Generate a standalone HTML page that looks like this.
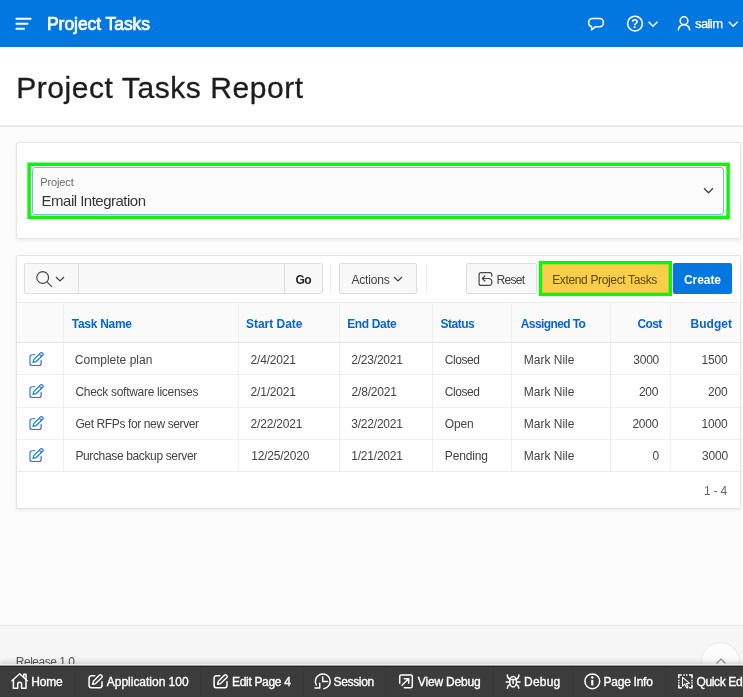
<!DOCTYPE html>
<html lang="en">
<head>
<meta charset="utf-8">
<title>Project Tasks Report</title>
<style>
*{box-sizing:border-box;margin:0;padding:0}
html,body{width:743px;height:697px;overflow:hidden}
body{font-family:"Liberation Sans",sans-serif;background:#fcfcfc;color:#262626;position:relative;font-size:12px}
.abs{position:absolute}
.t{position:absolute;white-space:nowrap;line-height:1;z-index:5}
svg{position:absolute;overflow:visible;z-index:4}
#hdr{left:0;top:0;width:743px;height:47px;background:#0277e0}
#titlebar{left:0;top:47px;width:743px;height:80px;background:#fff;border-bottom:2px solid #ececec}
.region{background:#fff;border:1px solid #e4e4e4;border-radius:2px;box-shadow:0 2px 3px rgba(0,0,0,.06)}
#r1{left:16px;top:142px;width:725px;height:97px}
#r2{left:16px;top:255px;width:725px;height:254px}
#sel{left:32px;top:167px;width:692px;height:48px;border:1px solid #86b3ea;background:#fcfcfc;border-radius:3px}
.btn{position:absolute;top:263px;height:31px;border:1px solid #dedede;background:#f8f8f8;border-radius:2px}
.tsep{position:absolute;top:263px;width:1px;height:31px;background:#efefef}
.hl{position:absolute;left:17px;width:723px;height:1px;background:#ebebeb}
.vl{position:absolute;top:302px;width:1px;height:169px;background:#eeeeee}
#footer{left:0;top:625px;width:743px;height:72px;background:#f6f6f6;border-top:1px solid #e6e6e6}
#dev{left:0;top:666px;width:743px;height:31px;background:#3c3c3c;border-top:1px solid #262626;box-shadow:0 -1px 0 #9a9a9a,0 -2px 0 #eee,0 -3px 6px rgba(0,0,0,.2);z-index:3}
.dsep{position:absolute;top:667px;width:1px;height:30px;background:#373737;z-index:4}
</style>
</head>
<body>
<!-- header -->
<div id="hdr" class="abs"></div>
<svg style="left:15px;top:17px" width="17" height="13" viewBox="0 0 17 13"><path d="M1.500 1.800h14M1.500 6.800h11M1.500 11.800h7.500" stroke="#fff" stroke-width="2.100" stroke-linecap="round" fill="none"/></svg>
<svg style="left:587px;top:17px" width="18" height="14" viewBox="0 0 18 14"><path d="M5.200 1.400h7.600a3.500 3.500 0 0 1 3.500 3.500v1.300a3.500 3.500 0 0 1-3.500 3.500H8.600L4.600 12.900V9.600A3.500 3.500 0 0 1 1.700 6.200V4.900A3.500 3.500 0 0 1 5.200 1.400z" stroke="#fff" stroke-width="1.500" fill="none" stroke-linejoin="round"/></svg>
<svg style="left:626px;top:15px" width="18" height="18" viewBox="0 0 18 18"><circle cx="9" cy="8.600" r="7.400" stroke="#fff" stroke-width="1.500" fill="none"/></svg>
<span class="t" style="left:631.300px;top:17.500px;font-size:12px;font-weight:bold;color:#fff">?</span>
<svg style="left:648px;top:21px" width="10" height="6" viewBox="0 0 10 6"><path d="M.6 .8l4.400 4.400 4.400-4.400" stroke="#fff" stroke-width="1.500" fill="none"/></svg>
<svg style="left:677px;top:16px" width="14" height="15" viewBox="0 0 14 15"><circle cx="7" cy="4.700" r="3.900" stroke="#fff" stroke-width="1.500" fill="none"/><path d="M1.200 14.300c.5-3.500 2.800-5.600 5.800-5.600s5.300 2.100 5.800 5.600" stroke="#fff" stroke-width="1.500" fill="none"/></svg>
<svg style="left:728px;top:21px" width="10" height="6" viewBox="0 0 10 6"><path d="M.8 .8l4.400 4.400 4.400-4.400" stroke="#fff" stroke-width="1.500" fill="none"/></svg>

<!-- title bar -->
<div id="titlebar" class="abs"></div>

<!-- region 1 -->
<div id="r1" class="abs region"></div>
<svg style="left:0;top:0" width="743" height="697" viewBox="0 0 743 697">
  <rect x="29.100" y="164.300" width="699" height="53" fill="none" stroke="#0cf60c" stroke-width="3.500" rx="0"/>
  <rect x="540.500" y="262.600" width="129.800" height="31.800" fill="#fbce4a" stroke="#0cf60c" stroke-width="3.400" rx="0"/>
</svg>
<div id="sel" class="abs"></div>
<svg style="left:703px;top:187px" width="11" height="7" viewBox="0 0 11 7"><path d="M1 1.300l4.500 4.500L10 1.300" stroke="#404040" stroke-width="1.300" fill="none"/></svg>

<!-- region 2 -->
<div id="r2" class="abs region"></div>

<!-- toolbar -->
<div class="btn" style="left:24px;width:299px"></div>
<div class="tsep" style="left:78px;top:264px;height:29px;background:#dedede"></div>
<div class="tsep" style="left:284px;top:264px;height:29px;background:#dedede"></div>
<svg style="left:35px;top:270px" width="18" height="18" viewBox="0 0 18 18"><circle cx="7.700" cy="7.500" r="5.900" stroke="#4a4a4a" stroke-width="1.200" fill="none"/><path d="M12 11.800L17 16.800" stroke="#4a4a4a" stroke-width="1.200"/></svg>
<svg style="left:55px;top:276px" width="10" height="6" viewBox="0 0 10 6"><path d="M1 1l4 4 4-4" stroke="#404040" stroke-width="1.200" fill="none"/></svg>
<div class="tsep" style="left:330px"></div>
<div class="btn" style="left:339px;width:78px"></div>
<svg style="left:393px;top:276px" width="10" height="6" viewBox="0 0 10 6"><path d="M1 1l4 4 4-4" stroke="#404040" stroke-width="1.200" fill="none"/></svg>
<div class="tsep" style="left:426px"></div>
<div class="btn" style="left:466px;width:71px"></div>
<svg style="left:0;top:0" width="743" height="697" viewBox="0 0 743 697"><g stroke="#454545" stroke-width="1.200" fill="none" stroke-linecap="round" stroke-linejoin="round"><path d="M491.800 276.200V274.700a2 2 0 0 0-2-2H481.100a2 2 0 0 0-2 2V283.400a2 2 0 0 0 2 2H488.400a3.450 3.450 0 0 0 0-6.900H482.500"/><path d="M484.900 276L482.400 278.500L484.900 281"/></g></svg>
<div class="abs" style="left:673px;top:263px;width:59px;height:31px;background:#0277e0;border-radius:2px;z-index:4"></div>

<!-- table -->
<div class="abs" style="left:17px;top:302px;width:723px;height:40px;background:#fafafa"></div>
<div class="hl" style="top:302px"></div>
<div class="hl" style="top:342px;background:#e4e4e4"></div>
<div class="hl" style="top:374px;background:#f0f0f0"></div>
<div class="hl" style="top:407px;background:#f0f0f0"></div>
<div class="hl" style="top:439px;background:#f0f0f0"></div>
<div class="hl" style="top:471px"></div>
<div class="vl" style="left:63px"></div>
<div class="vl" style="left:238px"></div>
<div class="vl" style="left:339px"></div>
<div class="vl" style="left:432px"></div>
<div class="vl" style="left:511px"></div>
<div class="vl" style="left:610px"></div>
<div class="vl" style="left:670px"></div>
<svg style="left:29px;top:352px" width="15" height="15" viewBox="0 0 15 15"><g stroke="#1f7ad8" stroke-width="1.200" fill="none" stroke-linejoin="round" stroke-linecap="round"><path d="M5.800 2.750H3a2 2 0 0 0-2 2V11.500a2 2 0 0 0 2 2h7.100a2 2 0 0 0 2-2V8.400"/><path d="M4 10.400l.8-2.900L11.500 0.900a1.200 1.200 0 0 1 1.700 0l.6.600a1.200 1.200 0 0 1 0 1.700L7 9.700z"/><path d="M10.300 2.100l2.300 2.300"/></g></svg>
<svg style="left:29px;top:384px" width="15" height="15" viewBox="0 0 15 15"><g stroke="#1f7ad8" stroke-width="1.200" fill="none" stroke-linejoin="round" stroke-linecap="round"><path d="M5.800 2.750H3a2 2 0 0 0-2 2V11.500a2 2 0 0 0 2 2h7.100a2 2 0 0 0 2-2V8.400"/><path d="M4 10.400l.8-2.900L11.500 0.900a1.200 1.200 0 0 1 1.700 0l.6.600a1.200 1.200 0 0 1 0 1.700L7 9.700z"/><path d="M10.300 2.100l2.300 2.300"/></g></svg>
<svg style="left:29px;top:416px" width="15" height="15" viewBox="0 0 15 15"><g stroke="#1f7ad8" stroke-width="1.200" fill="none" stroke-linejoin="round" stroke-linecap="round"><path d="M5.800 2.750H3a2 2 0 0 0-2 2V11.500a2 2 0 0 0 2 2h7.100a2 2 0 0 0 2-2V8.400"/><path d="M4 10.400l.8-2.900L11.500 0.900a1.200 1.200 0 0 1 1.700 0l.6.600a1.200 1.200 0 0 1 0 1.700L7 9.700z"/><path d="M10.300 2.100l2.300 2.300"/></g></svg>
<svg style="left:29px;top:448px" width="15" height="15" viewBox="0 0 15 15"><g stroke="#1f7ad8" stroke-width="1.200" fill="none" stroke-linejoin="round" stroke-linecap="round"><path d="M5.800 2.750H3a2 2 0 0 0-2 2V11.500a2 2 0 0 0 2 2h7.100a2 2 0 0 0 2-2V8.400"/><path d="M4 10.400l.8-2.900L11.500 0.900a1.200 1.200 0 0 1 1.700 0l.6.600a1.200 1.200 0 0 1 0 1.700L7 9.700z"/><path d="M10.300 2.100l2.300 2.300"/></g></svg>

<!-- footer -->
<div id="footer" class="abs"></div>
<div class="abs" style="left:701px;top:642px;width:39px;height:39px;border-radius:50%;background:#fcfcfc;border:1px solid #e9e9e9"></div>
<svg style="left:716px;top:658px" width="10" height="6" viewBox="0 0 10 6"><path d="M.5 5.500l4.500-4.500 4.500 4.500" stroke="#858585" stroke-width="1.200" fill="none"/></svg>

<div style="position:absolute;left:0;top:0;width:743px;height:697px;will-change:transform;z-index:2"><span class="t" style="left:15.8px;top:656.2px;font-size:12px;font-weight:normal;color:#555;letter-spacing:-0.48px;z-index:2">Release 1.0</span></div>
<!-- dev toolbar -->
<div id="dev" class="abs"></div>
<div class="dsep" style="left:75px"></div>
<div class="dsep" style="left:200px"></div>
<div class="dsep" style="left:303px"></div>
<div class="dsep" style="left:385px"></div>
<div class="dsep" style="left:493px"></div>
<div class="dsep" style="left:572px"></div>
<div class="dsep" style="left:665px"></div>
<svg style="left:0;top:0;z-index:6" width="743" height="697" viewBox="0 0 743 697">
<g stroke="#fff" stroke-width="1.500" fill="none" stroke-linejoin="round" stroke-linecap="round"><path d="M12 680.700L19.600 673.800L27.200 680.700"/><path d="M13.400 680.200V688.300H17.700V684.200a1.950 1.950 0 0 1 3.900 0V688.300H26V680.200"/><path d="M23.700 676.800V674.200H26V679.300"/></g>
<g stroke="#fff" stroke-width="1.500" fill="none" stroke-linejoin="round" stroke-linecap="round" transform="translate(88.3,674)"><path d="M6.500 1.800H3A2.200 2.200 0 0 0 .8 4V11.500a2.200 2.200 0 0 0 2.200 2.200h8.500a2.200 2.200 0 0 0 2.200-2.200V7.800"/><path d="M4.300 10.300l.8-3L11.300 1.100a1.100 1.100 0 0 1 1.600 0l.7.700a1.100 1.100 0 0 1 0 1.600L7.300 9.600z" stroke-width="1.400"/></g>
<g stroke="#fff" stroke-width="1.500" fill="none" stroke-linejoin="round" stroke-linecap="round" transform="translate(213.3,674)"><path d="M6.500 1.800H3A2.200 2.200 0 0 0 .8 4V11.500a2.200 2.200 0 0 0 2.200 2.200h8.500a2.200 2.200 0 0 0 2.200-2.200V7.800"/><path d="M4.300 10.300l.8-3L11.300 1.100a1.100 1.100 0 0 1 1.600 0l.7.700a1.100 1.100 0 0 1 0 1.600L7.300 9.600z" stroke-width="1.400"/></g>
<g stroke="#fff" stroke-width="1.500" fill="none" stroke-linejoin="round" stroke-linecap="round"><path d="M323.800 688.650A7.400 7.400 0 1 0 316.300 684.900"/><path d="M315 688h4.700v-4.700"/><path d="M322.700 677v4.600h4.800"/></g>
<g stroke="#fff" stroke-width="1.500" fill="none" stroke-linejoin="round" stroke-linecap="round"><path d="M399.700 683.200V676.500a1.500 1.500 0 0 1 1.500-1.500H410.800a1.500 1.500 0 0 1 1.500 1.500V686.200a1.500 1.500 0 0 1-1.500 1.500H404.300"/><path d="M402 685.200L408.600 678.800M404.300 678.700H408.700V683.200"/></g>
<g stroke="#fff" stroke-width="1.500" fill="none" stroke-linejoin="round" stroke-linecap="round" stroke-width="1.400"><ellipse cx="513.100" cy="681.700" rx="3.400" ry="5.200"/><path d="M509.900 679.500h6.400M513.100 680.800v2.600"/><path d="M509.800 679c-2-.5-2.500-2-2.500-4M516.400 679c2-.5 2.500-2 2.500-4M509.500 682h-3.300M516.700 682h3.300M509.900 684.600c-1.800.6-2.400 1.700-2.500 3.500M516.300 684.600c1.800.6 2.400 1.700 2.500 3.500"/></g>
<g stroke="#fff" stroke-width="1.500" fill="none" stroke-linejoin="round" stroke-linecap="round"><circle cx="592.300" cy="681.300" r="7.400"/></g><circle cx="592.300" cy="677.600" r="1.250" fill="#fff"/><rect x="591.200" y="679.900" width="2.200" height="5.500" fill="#fff"/>
<g stroke="#fff" stroke-width="1.500" fill="none"><path d="M678.800 678.300V675.100H681.800M689 675.100H692V678.300M692 684.600V687.700H689M681.800 687.700H678.800V684.600"/><path d="M683.400 675.100h1.500M686 675.100h1.500M678.800 679.800v1.400M678.800 682.200v1.400M692 679.800v1.400M692 682.200v1.400M688 687.700h-1"/></g><path d="M682.500 677.300v8.800l2.300-2 1.700 3.700 1.500-.7-1.700-3.600 3.100-.3z" fill="#3c3c3c" stroke="#fff" stroke-width="1.100" stroke-linejoin="round"/>
</svg>

<div id="txt" style="position:absolute;left:0;top:0;width:743px;height:697px;will-change:transform;z-index:5"><span class="t" style="left:47.0px;top:16.2px;font-size:17.5px;font-weight:normal;color:#fff;letter-spacing:-0.06px;-webkit-text-stroke:0.7px #fff">Project Tasks</span>
<span class="t" style="left:695.0px;top:17.4px;font-size:13px;font-weight:normal;color:#fff;letter-spacing:-0.59px;-webkit-text-stroke:0.25px #fff">salim</span>
<span class="t" style="left:16.2px;top:72.8px;font-size:30px;font-weight:normal;color:#1c1c1c;letter-spacing:0.56px;-webkit-text-stroke:0.3px #1c1c1c">Project Tasks Report</span>
<span class="t" style="left:40.2px;top:176.5px;font-size:11px;font-weight:normal;color:#686868;letter-spacing:-0.11px">Project</span>
<span class="t" style="left:41.6px;top:192.5px;font-size:15px;font-weight:normal;color:#363636;letter-spacing:-0.51px">Email Integration</span>
<span class="t" style="left:295.4px;top:273.8px;font-size:12px;font-weight:bold;color:#262626;letter-spacing:-0.47px">Go</span>
<span class="t" style="left:351.4px;top:273.8px;font-size:12px;font-weight:normal;color:#404040;letter-spacing:-0.16px">Actions</span>
<span class="t" style="left:496.4px;top:273.8px;font-size:12px;font-weight:normal;color:#404040;letter-spacing:-0.64px">Reset</span>
<span class="t" style="left:552.2px;top:273.8px;font-size:12px;font-weight:normal;color:#57480f;letter-spacing:-0.35px">Extend Project Tasks</span>
<span class="t" style="left:684.0px;top:273.8px;font-size:12px;font-weight:bold;color:#fff;letter-spacing:-0.07px">Create</span>
<span class="t" style="left:71.8px;top:318.0px;font-size:12px;font-weight:bold;color:#0565d2;letter-spacing:-0.29px">Task Name</span>
<span class="t" style="left:246.0px;top:318.0px;font-size:12px;font-weight:bold;color:#0565d2;letter-spacing:-0.03px">Start Date</span>
<span class="t" style="left:347.2px;top:318.0px;font-size:12px;font-weight:bold;color:#0565d2;letter-spacing:-0.35px">End Date</span>
<span class="t" style="left:440.4px;top:318.0px;font-size:12px;font-weight:bold;color:#0565d2;letter-spacing:-0.46px">Status</span>
<span class="t" style="left:520.8px;top:318.0px;font-size:12px;font-weight:bold;color:#0565d2;letter-spacing:-0.61px">Assigned To</span>
<span class="t" style="left:637.6px;top:318.0px;font-size:12px;font-weight:bold;color:#0565d2;letter-spacing:-0.69px">Cost</span>
<span class="t" style="left:690.6px;top:318.0px;font-size:12px;font-weight:bold;color:#0565d2;letter-spacing:0.01px">Budget</span>
<span class="t" style="left:74.8px;top:354.0px;font-size:12px;font-weight:normal;color:#444;letter-spacing:0.02px">Complete plan</span>
<span class="t" style="left:250.6px;top:354.0px;font-size:12px;font-weight:normal;color:#444;letter-spacing:-0.20px">2/4/2021</span>
<span class="t" style="left:351.2px;top:354.0px;font-size:12px;font-weight:normal;color:#444;letter-spacing:-0.20px">2/23/2021</span>
<span class="t" style="left:444.8px;top:354.0px;font-size:12px;font-weight:normal;color:#444;letter-spacing:-0.43px">Closed</span>
<span class="t" style="left:523.8px;top:354.0px;font-size:12px;font-weight:normal;color:#444;letter-spacing:-0.01px">Mark Nile</span>
<span class="t" style="left:633.2px;top:354.0px;font-size:12px;font-weight:normal;color:#444;letter-spacing:-0.20px">3000</span>
<span class="t" style="left:701.5px;top:354.0px;font-size:12px;font-weight:normal;color:#444;letter-spacing:-0.20px">1500</span>
<span class="t" style="left:75.4px;top:386.0px;font-size:12px;font-weight:normal;color:#444;letter-spacing:-0.29px">Check software licenses</span>
<span class="t" style="left:250.6px;top:386.0px;font-size:12px;font-weight:normal;color:#444;letter-spacing:-0.20px">2/1/2021</span>
<span class="t" style="left:351.6px;top:386.0px;font-size:12px;font-weight:normal;color:#444;letter-spacing:-0.20px">2/8/2021</span>
<span class="t" style="left:444.8px;top:386.0px;font-size:12px;font-weight:normal;color:#444;letter-spacing:-0.43px">Closed</span>
<span class="t" style="left:523.8px;top:386.0px;font-size:12px;font-weight:normal;color:#444;letter-spacing:-0.01px">Mark Nile</span>
<span class="t" style="left:638.9px;top:386.0px;font-size:12px;font-weight:normal;color:#444;letter-spacing:-0.20px">200</span>
<span class="t" style="left:708.1px;top:386.0px;font-size:12px;font-weight:normal;color:#444;letter-spacing:-0.20px">200</span>
<span class="t" style="left:75.4px;top:418.0px;font-size:12px;font-weight:normal;color:#444;letter-spacing:-0.38px">Get RFPs for new server</span>
<span class="t" style="left:250.6px;top:418.0px;font-size:12px;font-weight:normal;color:#444;letter-spacing:-0.20px">2/22/2021</span>
<span class="t" style="left:351.2px;top:418.0px;font-size:12px;font-weight:normal;color:#444;letter-spacing:-0.20px">3/22/2021</span>
<span class="t" style="left:444.8px;top:418.0px;font-size:12px;font-weight:normal;color:#444;letter-spacing:-0.19px">Open</span>
<span class="t" style="left:523.8px;top:418.0px;font-size:12px;font-weight:normal;color:#444;letter-spacing:-0.01px">Mark Nile</span>
<span class="t" style="left:632.4px;top:418.0px;font-size:12px;font-weight:normal;color:#444;letter-spacing:-0.20px">2000</span>
<span class="t" style="left:701.5px;top:418.0px;font-size:12px;font-weight:normal;color:#444;letter-spacing:-0.20px">1000</span>
<span class="t" style="left:75.4px;top:450.0px;font-size:12px;font-weight:normal;color:#444;letter-spacing:-0.36px">Purchase backup server</span>
<span class="t" style="left:251.2px;top:450.0px;font-size:12px;font-weight:normal;color:#444;letter-spacing:-0.20px">12/25/2020</span>
<span class="t" style="left:351.2px;top:450.0px;font-size:12px;font-weight:normal;color:#444;letter-spacing:-0.20px">1/21/2021</span>
<span class="t" style="left:444.8px;top:450.0px;font-size:12px;font-weight:normal;color:#444;letter-spacing:-0.14px">Pending</span>
<span class="t" style="left:523.8px;top:450.0px;font-size:12px;font-weight:normal;color:#444;letter-spacing:-0.01px">Mark Nile</span>
<span class="t" style="left:652.5px;top:450.0px;font-size:12px;font-weight:normal;color:#444;letter-spacing:-0.20px">0</span>
<span class="t" style="left:702.1px;top:450.0px;font-size:12px;font-weight:normal;color:#444;letter-spacing:-0.20px">3000</span>
<span class="t" style="left:703.9px;top:484.8px;font-size:12px;font-weight:normal;color:#666;letter-spacing:-0.20px">1 - 4</span>
<span class="t" style="left:31.2px;top:675.6px;font-size:12px;font-weight:normal;color:#fff;letter-spacing:-0.14px;-webkit-text-stroke:0.35px #fff">Home</span>
<span class="t" style="left:106.8px;top:675.6px;font-size:12px;font-weight:normal;color:#fff;letter-spacing:-0.02px;-webkit-text-stroke:0.35px #fff">Application 100</span>
<span class="t" style="left:232.0px;top:675.6px;font-size:12px;font-weight:normal;color:#fff;letter-spacing:-0.32px;-webkit-text-stroke:0.35px #fff">Edit Page 4</span>
<span class="t" style="left:333.6px;top:675.6px;font-size:12px;font-weight:normal;color:#fff;letter-spacing:-0.35px;-webkit-text-stroke:0.35px #fff">Session</span>
<span class="t" style="left:417.8px;top:675.6px;font-size:12px;font-weight:normal;color:#fff;letter-spacing:-0.17px;-webkit-text-stroke:0.35px #fff">View Debug</span>
<span class="t" style="left:524.0px;top:675.6px;font-size:12px;font-weight:normal;color:#fff;letter-spacing:0.21px;-webkit-text-stroke:0.35px #fff">Debug</span>
<span class="t" style="left:603.6px;top:675.6px;font-size:12px;font-weight:normal;color:#fff;letter-spacing:-0.27px;-webkit-text-stroke:0.35px #fff">Page Info</span>
<span class="t" style="left:696.4px;top:675.6px;font-size:12px;font-weight:normal;color:#fff;letter-spacing:-0.34px;-webkit-text-stroke:0.35px #fff">Quick Edit</span></div>
</body>
</html>
